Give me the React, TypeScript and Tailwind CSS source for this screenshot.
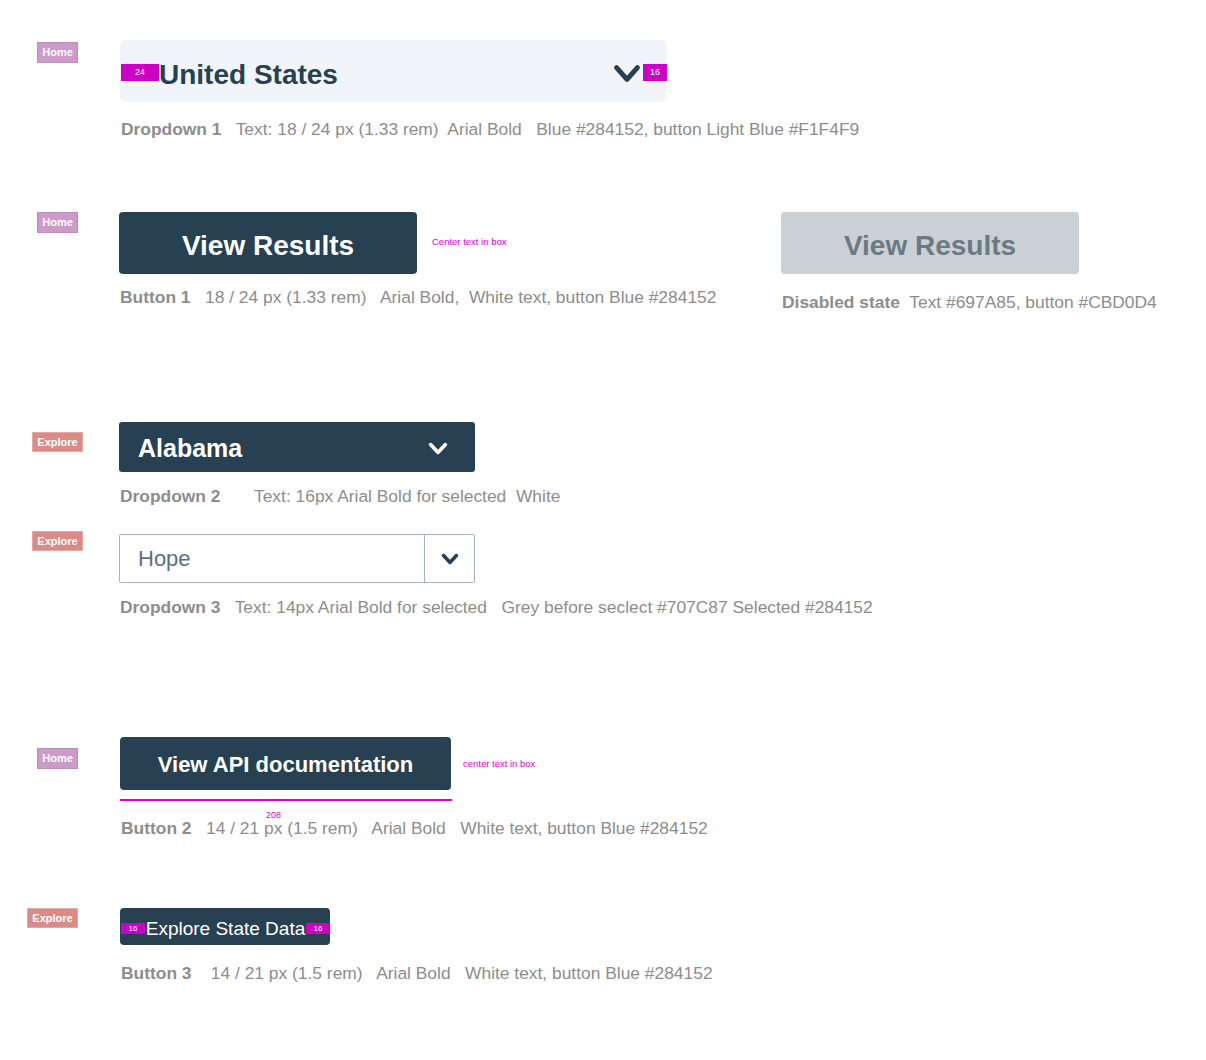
import React from "react";

const Chevron = ({ w, h, sw, color }: { w: number; h: number; sw: number; color: string }) => (
  <svg width={w} height={h} viewBox={`0 0 ${w} ${h}`} fill="none">
    <polyline
      points={`${sw / 1.4},${sw / 1.4} ${w / 2},${h - sw / 1.4} ${w - sw / 1.4},${sw / 1.4}`}
      stroke={color}
      strokeWidth={sw}
      strokeLinecap="round"
      strokeLinejoin="round"
    />
  </svg>
);

const HomeBadge = ({ ml, mt }: { ml: string; mt: string }) => (
  <div className={`${ml} ${mt} flex h-[21px] w-[41px] items-center justify-center border border-[#bf8cbd] bg-[#cd9bc9] text-[11px] font-bold text-white`}>
    Home
  </div>
);

const ExploreBadge = ({ ml, mt }: { ml: string; mt: string }) => (
  <div className={`${ml} ${mt} flex h-[20px] w-[51px] items-center justify-center border border-[#e3a9a6] bg-[#d98b88] text-[11px] font-bold text-white`}>
    Explore
  </div>
);

const Caption = ({ children, mt }: { children: React.ReactNode; mt: string }) => (
  <div className={`${mt} ml-[1px] h-[20px] whitespace-pre text-[17.4px] leading-[20px] text-[#8d8d8d]`}>{children}</div>
);

export default function App() {
  return (
    <div
      className="relative h-[1060px] w-[1206px] overflow-hidden bg-white"
      style={{ fontFamily: '"Liberation Sans", Arial, sans-serif' }}
    >
      {/* Section 1 */}
      <div className="flex pt-[40px]">
        <div className="w-[120px] shrink-0">
          <HomeBadge ml="ml-[37px]" mt="mt-[2px]" />
        </div>
        <div className="flex flex-col">
          <div className="flex h-[62px] w-[547px] items-center rounded-[6px] bg-[#F1F4F9]">
            <div className="ml-[1px] mt-[3px] flex h-[17px] w-[38px] items-center justify-center bg-[#cc00c4] text-[9px] text-white">24</div>
            <div className="mt-[8px] text-[28px] font-bold leading-none text-[#284152]">United States</div>
            <div className="flex-1" />
            <div className="mt-[5px] mr-[2px]">
              <Chevron w={28} h={19} sw={5} color="#284152" />
            </div>
            <div className="mt-[3px] flex h-[17px] w-[24px] items-center justify-center bg-[#cc00c4] text-[9px] text-white">16</div>
          </div>
          <Caption mt="mt-[17px]">
            <b className="font-bold">Dropdown 1</b>
            {"   Text: 18 / 24 px (1.33 rem)  Arial Bold   Blue #284152, button Light Blue #F1F4F9"}
          </Caption>
        </div>
      </div>

      {/* Section 2 */}
      <div className="mt-[73px] flex">
        <div className="w-[119px] shrink-0">
          <HomeBadge ml="ml-[37px]" mt="mt-[0px]" />
        </div>
        <div className="flex w-[662px] shrink-0 flex-col">
          <div className="flex items-start">
            <div className="flex h-[62px] w-[298px] items-center justify-center rounded-[4px] bg-[#284152] pt-[5px] text-[28px] font-bold text-white">
              View Results
            </div>
            <div className="ml-[15px] mt-[25px] text-[9.5px] leading-[10px] text-[#d600d0]">Center text in box</div>
          </div>
          <Caption mt="mt-[13px]">
            <b className="font-bold">Button 1</b>
            {"   18 / 24 px (1.33 rem)   Arial Bold,  White text, button Blue #284152"}
          </Caption>
        </div>
        <div className="flex flex-col">
          <div className="flex h-[62px] w-[298px] items-center justify-center rounded-[4px] bg-[#CBD0D4] pt-[5px] text-[28px] font-bold text-[#697A85]">
            View Results
          </div>
          <Caption mt="mt-[18px]">
            <b className="font-bold">Disabled state</b>
            {"  Text #697A85, button #CBD0D4"}
          </Caption>
        </div>
      </div>

      {/* Section 3 */}
      <div className="mt-[110px] flex">
        <div className="w-[119px] shrink-0">
          <ExploreBadge ml="ml-[32px]" mt="mt-[10px]" />
        </div>
        <div className="flex flex-col">
          <div className="flex h-[50px] w-[356px] items-center rounded-[3px] bg-[#284152] pl-[19px] pr-[27px]">
            <div className="mt-[2px] text-[25px] font-bold leading-none text-white">Alabama</div>
            <div className="flex-1" />
            <div className="mt-[2px]">
              <Chevron w={20} h={13} sw={3.6} color="#ffffff" />
            </div>
          </div>
          <Caption mt="mt-[14px]">
            <b className="font-bold">Dropdown 2</b>
            {"       Text: 16px Arial Bold for selected  White"}
          </Caption>
        </div>
      </div>

      <div className="mt-[25px] flex">
        <div className="w-[119px] shrink-0">
          <ExploreBadge ml="ml-[32px]" mt="mt-[0px]" />
        </div>
        <div className="mt-[3px] flex flex-col">
          <div className="flex h-[49px] w-[356px] items-stretch rounded-[2px] border-[1.5px] border-[#a3b3c6] bg-white">
            <div className="flex flex-1 items-center pl-[18px] text-[22px] leading-none text-[#5f6f7e]">Hope</div>
            <div className="flex w-[50px] items-center justify-center border-l-[1.5px] border-[#a3b3c6]">
              <div className="mt-[1px]">
                <Chevron w={18} h={12} sw={3.6} color="#284152" />
              </div>
            </div>
          </div>
          <Caption mt="mt-[14px]">
            <b className="font-bold">Dropdown 3</b>
            {"   Text: 14px Arial Bold for selected   Grey before seclect #707C87 Selected #284152"}
          </Caption>
        </div>
      </div>

      {/* Section 4 */}
      <div className="mt-[120px] flex">
        <div className="w-[120px] shrink-0">
          <HomeBadge ml="ml-[37px]" mt="mt-[11px]" />
        </div>
        <div className="relative flex flex-col">
          <div className="flex items-start">
            <div className="flex h-[53px] w-[331px] items-center justify-center rounded-[4px] bg-[#284152] pt-[1px] text-[22px] font-bold text-white">
              View API documentation
            </div>
            <div className="ml-[12px] mt-[22px] text-[9.5px] leading-[10px] text-[#d600d0]">center text in box</div>
          </div>
          <div className="mt-[9px] h-[2px] w-[332px] bg-[#d600d0]" />
          <Caption mt="mt-[17px]">
            <b className="font-bold">Button 2</b>
            {"   14 / 21 px (1.5 rem)   Arial Bold   White text, button Blue #284152"}
          </Caption>
          <div className="absolute left-[146px] top-[73px] text-[9px] leading-[10px] text-[#d600d0]">208</div>
        </div>
      </div>

      {/* Section 5 */}
      <div className="mt-[70px] flex">
        <div className="w-[120px] shrink-0">
          <ExploreBadge ml="ml-[27px]" mt="mt-[0px]" />
        </div>
        <div className="flex flex-col">
          <div className="flex h-[37px] w-[210px] items-center rounded-[4px] bg-[#284152]">
            <div className="ml-[1px] mt-[4px] flex h-[11px] w-[24px] items-center justify-center bg-[#cc00c4] text-[8px] text-white">16</div>
            <div className="mt-[4px] flex-1 text-center text-[19px] leading-none text-white">Explore State Data</div>
            <div className="mt-[4px] flex h-[11px] w-[24px] items-center justify-center bg-[#cc00c4] text-[8px] text-white">16</div>
          </div>
          <Caption mt="mt-[18px]">
            <b className="font-bold">Button 3</b>
            {"    14 / 21 px (1.5 rem)   Arial Bold   White text, button Blue #284152"}
          </Caption>
        </div>
      </div>
    </div>
  );
}
